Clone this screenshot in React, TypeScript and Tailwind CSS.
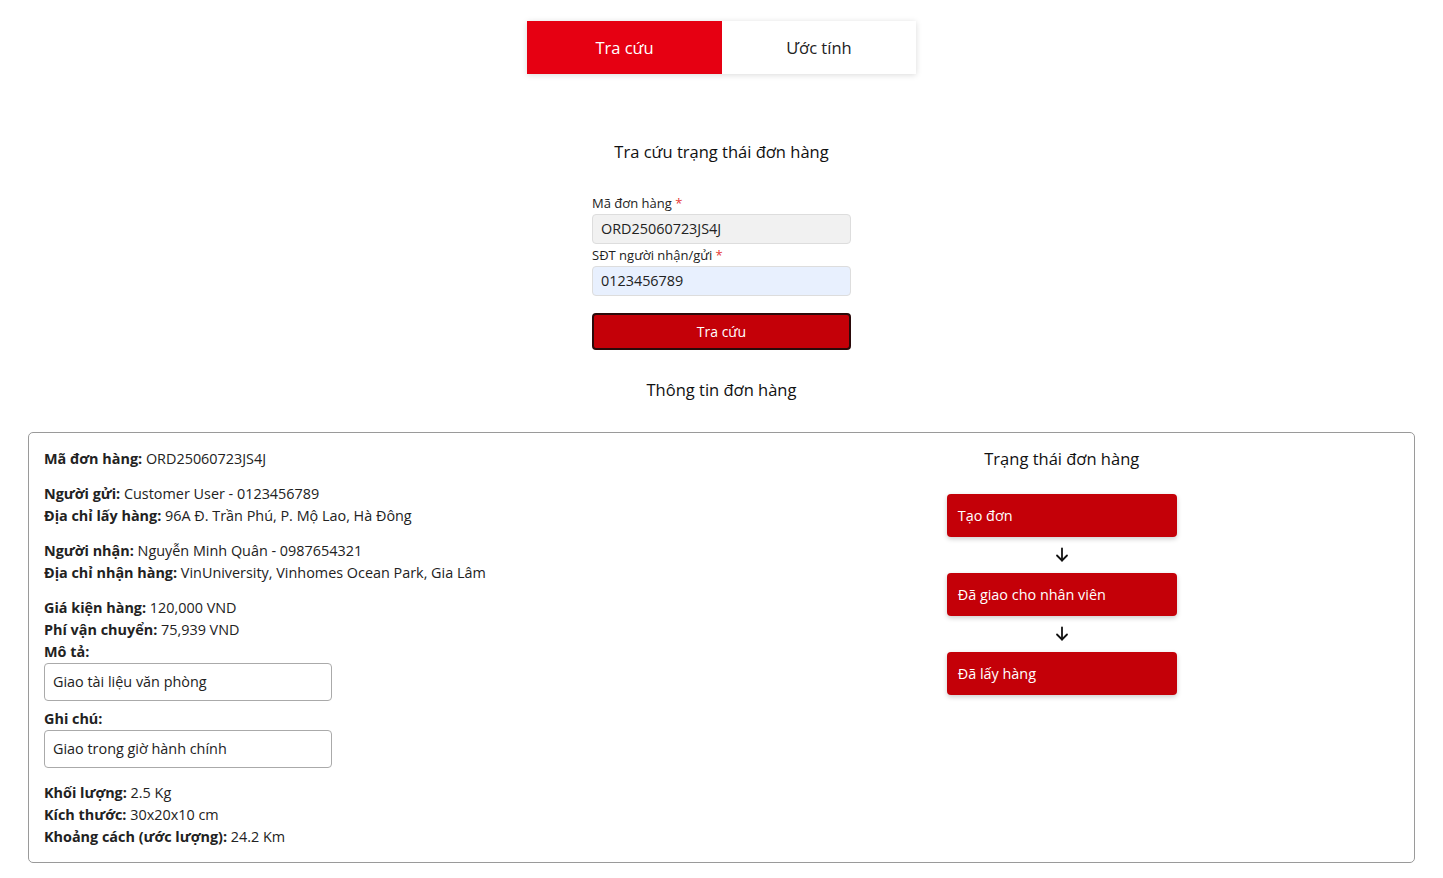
import React from "react";

const font = { fontFamily: '"Open Sans", "Noto Sans", sans-serif' };

type Row = { label: string; value: string };

const groups: Row[][] = [
  [{ label: "Mã đơn hàng:", value: "ORD25060723JS4J" }],
  [
    { label: "Người gửi:", value: "Customer User - 0123456789" },
    { label: "Địa chỉ lấy hàng:", value: "96A Đ. Trần Phú, P. Mộ Lao, Hà Đông" },
  ],
  [
    { label: "Người nhận:", value: "Nguyễn Minh Quân - 0987654321" },
    { label: "Địa chỉ nhận hàng:", value: "VinUniversity, Vinhomes Ocean Park, Gia Lâm" },
  ],
];

const steps = ["Tạo đơn", "Đã giao cho nhân viên", "Đã lấy hàng"];

function Line({ label, value }: Row) {
  return (
    <p className="leading-[22px]">
      <span className="font-bold">{label}</span> {value}
    </p>
  );
}

function ReadonlyBox({ text }: { text: string }) {
  return (
    <div className="flex h-[38px] w-[288px] items-center rounded-[4px] border border-[#aaaaaa] px-2">
      {text}
    </div>
  );
}

function ArrowDown() {
  return (
    <svg width="16" height="16" viewBox="0 0 16 16" fill="none" stroke="#111" strokeWidth="1.8" strokeLinecap="round" strokeLinejoin="round">
      <path d="M8 1.5v12" />
      <path d="M3 8.5l5 5 5-5" />
    </svg>
  );
}

export default function App() {
  return (
    <div className="min-h-screen bg-white text-[#222]" style={font}>
      <div className="flex justify-center pt-[21px]">
        <div className="flex shadow-[0_1px_6px_rgba(0,0,0,0.15)]">
          <button className="h-[53px] w-[195px] pt-px bg-[#e60012] text-[16.5px] text-white">Tra cứu</button>
          <button className="h-[53px] w-[194px] pt-px bg-white text-[16.5px] text-[#222]">Ước tính</button>
        </div>
      </div>

      <h2 className="mt-[66px] text-center text-[16.5px] leading-6 text-[#111]">Tra cứu trạng thái đơn hàng</h2>

      <form className="mx-auto mt-[28px] flex w-[259px] flex-col">
        <label className="text-[13px] leading-[22px] text-[#222]">
          Mã đơn hàng <span className="text-[#e53935]">*</span>
        </label>
        <div className="flex h-[30px] items-center rounded-[4px] border border-[#dddddd] bg-[#f1f1f1] px-2 text-[14.4px]">
          ORD25060723JS4J
        </div>
        <label className="text-[13px] leading-[22px] text-[#222]">
          SĐT người nhận/gửi <span className="text-[#e53935]">*</span>
        </label>
        <div className="flex h-[30px] items-center rounded-[4px] border border-[#dddddd] bg-[#e8f0fe] px-2 text-[14.4px]">
          0123456789
        </div>
        <button
          type="button"
          className="mt-[17px] h-[37px] rounded-[4px] border-2 border-[#2a0a0a] bg-[#c40008] text-[14px] text-white"
        >
          Tra cứu
        </button>
      </form>

      <h2 className="mt-[28px] text-center text-[16.5px] leading-6 text-[#111]">Thông tin đơn hàng</h2>

      <div className="mx-[28px] mt-[30px] mb-4 flex rounded-[5px] border border-[#9a9a9a] px-[15px] pt-[15px] pb-[14px] text-[14.4px] text-[#222]">
        <div className="flex flex-1 flex-col">
          {groups.map((g, i) => (
            <div key={i} className="mb-[13px]">
              {g.map((r) => (
                <Line key={r.label} {...r} />
              ))}
            </div>
          ))}
          <Line label="Giá kiện hàng:" value="120,000 VND" />
          <Line label="Phí vận chuyển:" value="75,939 VND" />
          <p className="font-bold leading-[22px]">Mô tả:</p>
          <ReadonlyBox text="Giao tài liệu văn phòng" />
          <p className="mt-[7px] font-bold leading-[22px]">Ghi chú:</p>
          <ReadonlyBox text="Giao trong giờ hành chính" />
          <div className="mt-[14px]">
            <Line label="Khối lượng:" value="2.5 Kg" />
            <Line label="Kích thước:" value="30x20x10 cm" />
            <Line label="Khoảng cách (ước lượng):" value="24.2 Km" />
          </div>
        </div>
        <div className="flex flex-1 flex-col items-center pl-[6px]">
          <h3 className="mt-[-1px] text-[16.5px] leading-6 text-[#111]">Trạng thái đơn hàng</h3>
          <div className="mt-[23px] flex flex-col items-center">
            {steps.map((s, i) => (
              <React.Fragment key={s}>
                {i > 0 && (
                  <div className="flex h-[36px] items-center justify-center">
                    <ArrowDown />
                  </div>
                )}
                <div className="flex h-[43px] w-[230px] items-center rounded-[4px] bg-[#c40008] px-[11px] text-[14.4px] text-white shadow-[0_2px_5px_rgba(0,0,0,0.2)]">
                  {s}
                </div>
              </React.Fragment>
            ))}
          </div>
        </div>
      </div>
    </div>
  );
}
